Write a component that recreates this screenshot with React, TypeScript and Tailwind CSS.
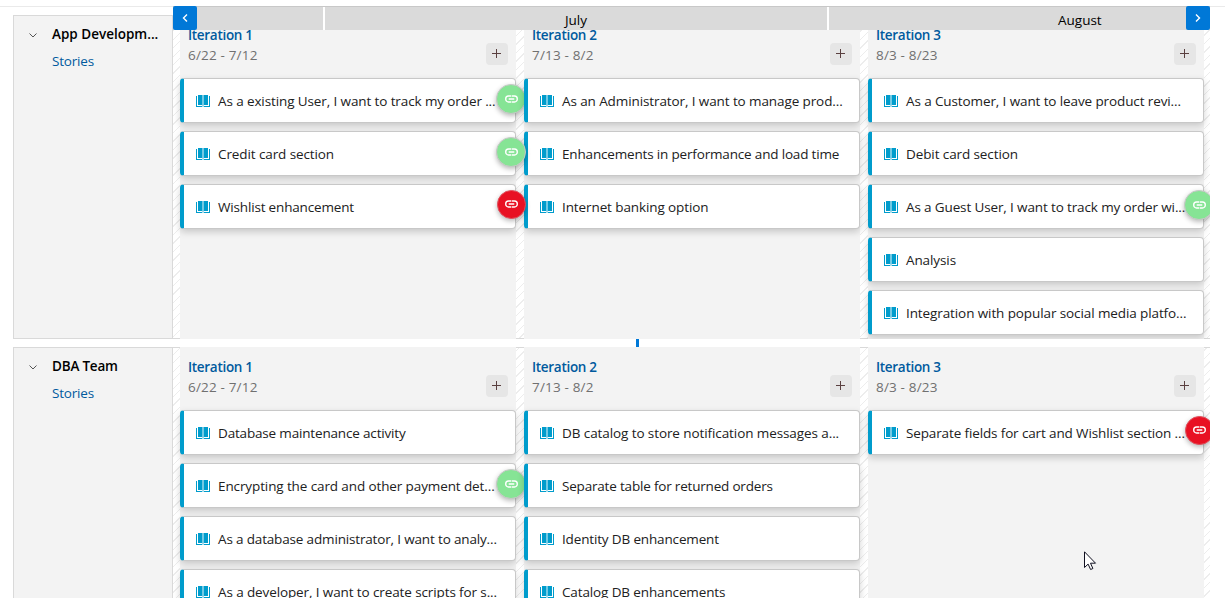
import React from "react";

type Badge = "green" | "greenUnder" | "red";
type Story = { text: string; track: string; badge?: Badge };
type Iteration = { name: string; dates: string; stories: Story[] };
type Team = { name: string; track: string; height: string; iterations: Iteration[] };

const teams: Team[] = [
  {
    name: "App Developm...",
    track: "tracking-[0px]",
    height: "h-[324px]",
    iterations: [
      {
        name: "Iteration 1",
        dates: "6/22 - 7/12",
        stories: [
          { text: "As a existing User, I want to track my order ...", track: "tracking-[-0.11px]", badge: "greenUnder" },
          { text: "Credit card section", track: "tracking-[-0.1px]", badge: "green" },
          { text: "Wishlist enhancement", track: "tracking-[-0.17px]", badge: "red" },
        ],
      },
      {
        name: "Iteration 2",
        dates: "7/13 - 8/2",
        stories: [
          { text: "As an Administrator, I want to manage prod...", track: "tracking-[-0.1px]" },
          { text: "Enhancements in performance and load time", track: "tracking-[-0.17px]" },
          { text: "Internet banking option", track: "tracking-[-0.1px]" },
        ],
      },
      {
        name: "Iteration 3",
        dates: "8/3 - 8/23",
        stories: [
          { text: "As a Customer, I want to leave product revi...", track: "tracking-[-0.11px]" },
          { text: "Debit card section", track: "tracking-[-0.1px]" },
          { text: "As a Guest User, I want to track my order wi...", track: "tracking-[-0.13px]", badge: "green" },
          { text: "Analysis", track: "tracking-[-0.1px]" },
          { text: "Integration with popular social media platfo...", track: "tracking-[-0.1px]" },
        ],
      },
    ],
  },
  {
    name: "DBA Team",
    track: "tracking-[-0.2px]",
    height: "h-[324px]",
    iterations: [
      {
        name: "Iteration 1",
        dates: "6/22 - 7/12",
        stories: [
          { text: "Database maintenance activity", track: "tracking-[-0.17px]" },
          { text: "Encrypting the card and other payment det...", track: "tracking-[-0.11px]", badge: "greenUnder" },
          { text: "As a database administrator, I want to analy...", track: "tracking-[-0.16px]" },
          { text: "As a developer, I want to create scripts for s...", track: "tracking-[-0.11px]" },
        ],
      },
      {
        name: "Iteration 2",
        dates: "7/13 - 8/2",
        stories: [
          { text: "DB catalog to store notification messages a...", track: "tracking-[-0.09px]" },
          { text: "Separate table for returned orders", track: "tracking-[-0.19px]" },
          { text: "Identity DB enhancement", track: "tracking-[-0.15px]" },
          { text: "Catalog DB enhancements", track: "tracking-[-0.13px]" },
        ],
      },
      {
        name: "Iteration 3",
        dates: "8/3 - 8/23",
        stories: [
          { text: "Separate fields for cart and Wishlist section ...", track: "tracking-[-0.13px]", badge: "red" },
        ],
      },
    ],
  },
];

const badgeStyles: Record<Badge, string> = {
  green: "left-[316px] h-[30px] w-[30px] z-20 bg-[#86e495] border-[#c8c8c8]",
  greenUnder: "left-[316px] h-[30px] w-[30px] z-0 bg-[#86e495] border-[#c8c8c8]",
  red: "left-[316.5px] h-[29px] w-[29px] z-20 bg-[#e81123] border-[#e0505c]",
};

function BookIcon() {
  return (
    <svg className="h-3 w-3.5 shrink-0" viewBox="0 0 14 12" fill="#009ccc">
      <path d="M0 1h1v10h5v1H0zM13 1h1v11H8v-1h5z" />
      <path d="M2 0h4v10H2zM8 0h4v10H8z" />
      <path d="M6 0h2v10H6z" opacity=".55" />
      <path d="M6 10h2v2H6z" opacity=".35" />
    </svg>
  );
}

function LinkBadge({ kind }: { kind: Badge }) {
  return (
    <span
      className={`absolute top-1.5 flex items-center justify-center rounded-full border shadow-[0_2px_5px_rgba(0,0,0,0.28)] ${badgeStyles[kind]}`}
    >
      <svg className="mb-px h-2 w-[13px]" viewBox="0 0 13 8" fill="none" stroke="#fff" strokeWidth="1.4">
        <path d="M6.2 1H3.5a2.8 3 0 0 0 0 6h2.7M6.8 1h2.7a2.8 3 0 0 1 0 6H6.8M3.7 4h5.6" />
      </svg>
    </span>
  );
}

function StoryCard({ story }: { story: Story }) {
  return (
    <div className="relative h-[45px] shrink-0">
      <div className="flex h-full items-center rounded border border-l-4 border-[#c8c8c8] border-l-[#009ccc] bg-white pl-3 shadow-[0_3px_7px_rgba(0,0,0,0.18)]">
        <BookIcon />
        <span className={`ml-2 whitespace-nowrap text-[13.5px] leading-5 text-[#212121] ${story.track}`}>{story.text}</span>
      </div>
      {story.badge && <LinkBadge kind={story.badge} />}
    </div>
  );
}

function IterationColumn({ iteration }: { iteration: Iteration }) {
  return (
    <section className="relative flex w-[336px] shrink-0 flex-col bg-[#f3f3f3]">
      <header className="flex h-[63px] shrink-0 justify-between pt-[10px] pr-2 pl-2">
        <div>
          <h3 className="text-[13.5px] leading-5 font-semibold tracking-[-0.3px] text-[#005a9e]">{iteration.name}</h3>
          <p className="text-[13.5px] leading-5 tracking-[0.18px] text-[#707070]">{iteration.dates}</p>
        </div>
        <button className="mt-[18px] flex h-[22px] w-[22px] items-center justify-center rounded-sm bg-[#e6e6e6] pr-px pb-px">
          <svg className="h-[9px] w-[9px]" viewBox="0 0 9 9" stroke="#5a4040">
            <path d="M0 4.5h9M4.5 0v9" />
          </svg>
        </button>
      </header>
      <div className="flex flex-col gap-2">
        {iteration.stories.map((s) => (
          <StoryCard key={s.text} story={s} />
        ))}
      </div>
    </section>
  );
}

function TeamRow({ team }: { team: Team }) {
  return (
    <div className={`isolate flex w-[1197px] shrink-0 overflow-hidden ${team.height}`}>
      <aside className="flex w-40 shrink-0 items-start border border-[#d9d9d9] bg-[#f3f3f3] pt-[8px] pl-[15px]">
        <svg className="mt-2 h-2 w-2 shrink-0" viewBox="0 0 8 8" fill="none" stroke="#555">
          <path d="M.5 1.5l3.5 3.5L7.5 1.5" />
        </svg>
        <div className="ml-[15px] flex flex-col gap-[7px]">
          <h2 className={`whitespace-nowrap text-[13.5px] leading-5 font-semibold text-black ${team.track}`}>{team.name}</h2>
          <a className="text-[13.5px] leading-5 tracking-[-0.2px] text-[#005a9e]">Stories</a>
        </div>
      </aside>
      <div className="flex flex-1 gap-2 overflow-hidden bg-[repeating-linear-gradient(135deg,#fff_0px,#fff_5px,#ededed_5px,#ededed_6px)] pl-[7px] shadow-[inset_0_1px_#d9d9d9,inset_0_-1px_#d9d9d9]">
        {team.iterations.map((it) => (
          <IterationColumn key={it.name} iteration={it} />
        ))}
      </div>
    </div>
  );
}

function Arrow({ right = false }: { right?: boolean }) {
  return (
    <button className="flex h-6 w-6 shrink-0 items-center justify-center rounded-xs bg-[#0078d7]">
      <svg className="h-2 w-1.5" viewBox="0 0 6 8" fill="none" stroke="#fff" strokeWidth="1.4">
        <path d={right ? "M1 .5L4.5 4 1 7.5" : "M5 .5L1.5 4 5 7.5"} />
      </svg>
    </button>
  );
}

export default function App() {
  return (
    <main className="relative h-[598px] w-[1225px] overflow-hidden bg-white font-['Open_Sans','Noto_Sans',sans-serif]">
      <div className="flex flex-col gap-2 pt-[15px] pl-[13px]">
        {teams.map((t) => (
          <TeamRow key={t.name} team={t} />
        ))}
      </div>

      <div className="absolute top-1.5 left-0 flex h-6 w-full items-start">
        <div className="h-px w-[173px] bg-[#eaeaea]" />
        <div className="flex h-6 w-[1037px] border-t border-[#c8c8c8] bg-[#dadada] text-[13.5px] leading-[26px] text-black">
          <div className="-mt-px"><Arrow /></div>
          <div className="w-[126px]" />
          <div className="w-0.5 bg-white" />
          <div className="w-[502px] text-center">July</div>
          <div className="w-0.5 bg-white" />
          <div className="flex-1 pl-[229px]">August</div>
          <div className="-mt-px"><Arrow right /></div>
        </div>
        <div className="h-px flex-1 bg-[#eaeaea]" />
      </div>

      <div className="absolute top-[339px] left-[636px] h-2 w-[3px] bg-[#0078d7]" />

      <svg className="absolute top-[551px] left-[1084px] h-5 w-[13px]" viewBox="0 0 13 20" fill="#fff" stroke="#101020">
        <path d="M.5 .8v15.7l3.6-3.4 2.5 5.4 2.3-1-2.4-5.3h5z" />
      </svg>
    </main>
  );
}
